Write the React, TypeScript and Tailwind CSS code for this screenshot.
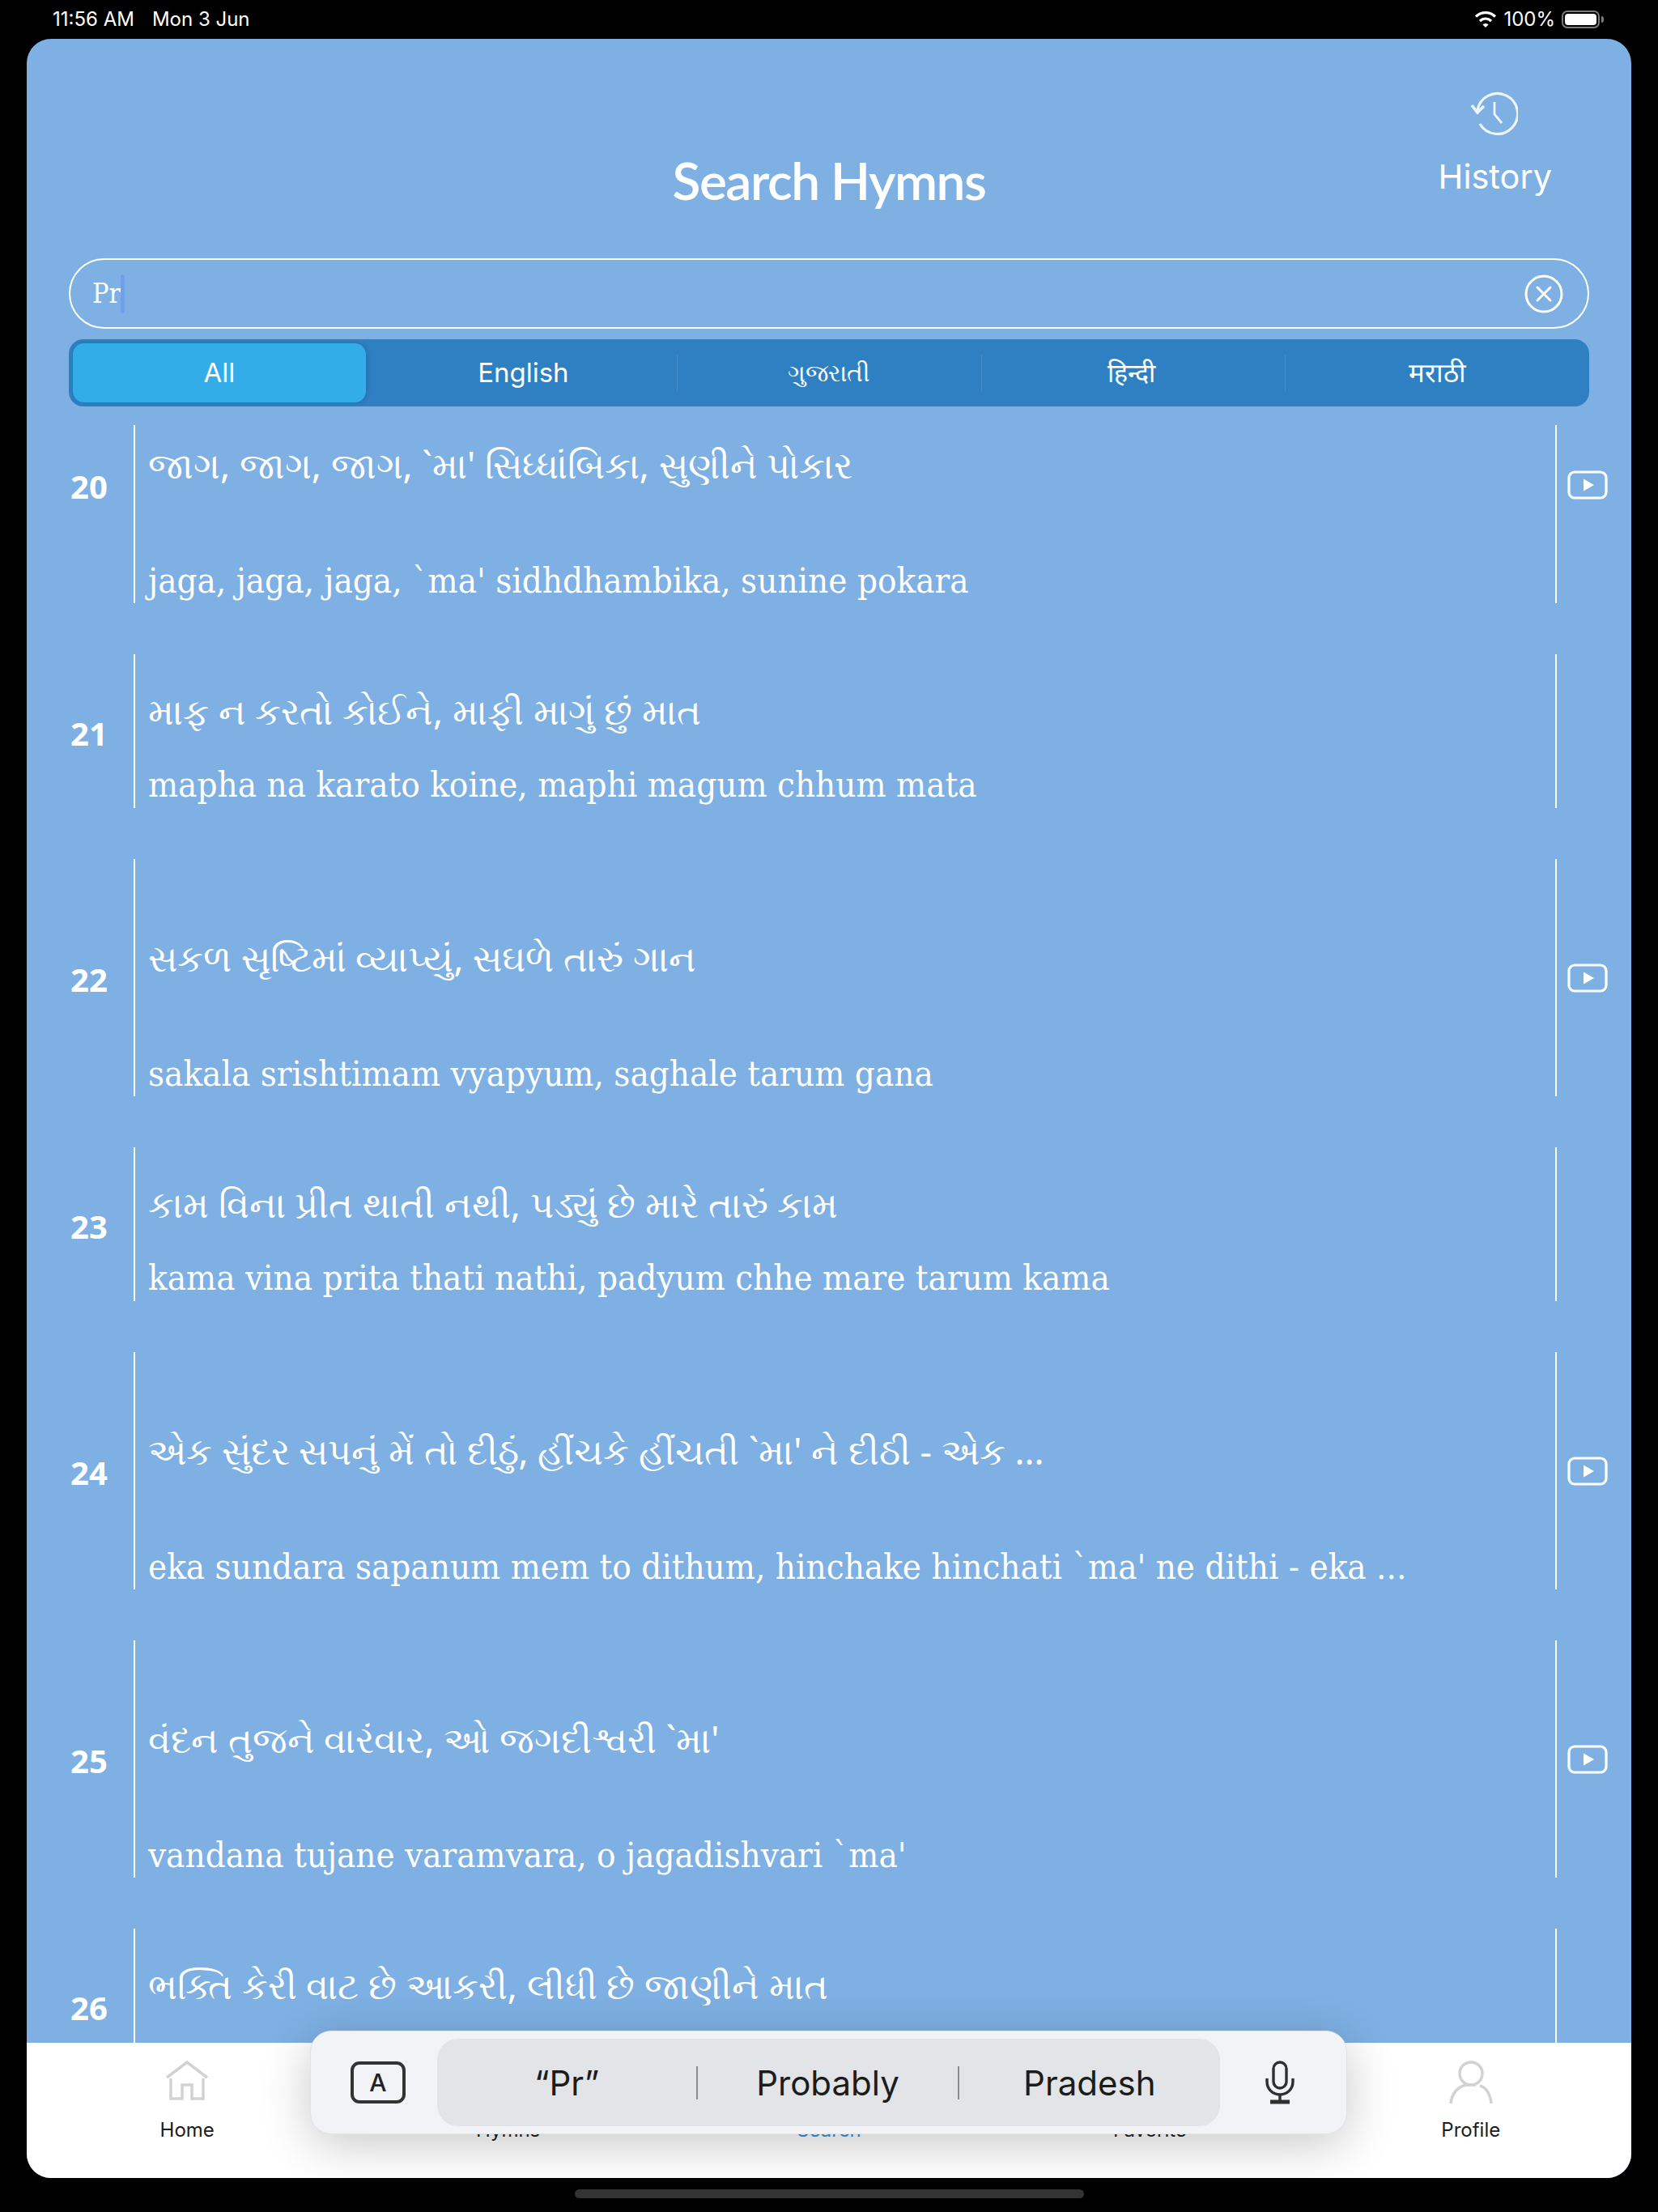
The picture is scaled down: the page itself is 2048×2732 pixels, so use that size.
const serif = "font-['DejaVu_Serif_Condensed','DejaVu_Serif',serif] font-stretch-condensed"

const hymns = [
  { num: 20, gu: "જાગ, જાગ, જાગ, `મા' સિધ્ધાંબિકા, સુણીને પોકાર", en: "jaga, jaga, jaga, `ma' sidhdhambika, sunine pokara", video: true },
  { num: 21, gu: "માફ ન કરતો કોઈને, માફી માગું છું માત", en: "mapha na karato koine, maphi magum chhum mata", video: false },
  { num: 22, gu: "સકળ સૃષ્ટિમાં વ્યાપ્યું, સઘળે તારું ગાન", en: "sakala srishtimam vyapyum, saghale tarum gana", video: true },
  { num: 23, gu: "કામ વિના પ્રીત થાતી નથી, પડ્યું છે મારે તારું કામ", en: "kama vina prita thati nathi, padyum chhe mare tarum kama", video: false },
  { num: 24, gu: "એક સુંદર સપનું મેં તો દીઠું, હીંચકે હીંચતી `મા' ને દીઠી - એક ...", en: "eka sundara sapanum mem to dithum, hinchake hinchati `ma' ne dithi - eka ...", video: true },
  { num: 25, gu: "વંદન તુજને વારંવાર, ઓ જગદીશ્વરી `મા'", en: "vandana tujane varamvara, o jagadishvari `ma'", video: true },
  { num: 26, gu: "ભક્તિ કેરી વાટ છે આકરી, લીધી છે જાણીને માત", en: "bhakti keri vata chhe akari, lidhi chhe janine mata", video: false },
]

const tabs = [
  { label: "All", size: "text-[33px]" },
  { label: "English", size: "text-[33px]" },
  { label: "ગુજરાતી", size: "text-[30px]" },
  { label: "हिन्दी", size: "text-[32px] pr-[5px]" },
  { label: "मराठी", size: "text-[33px]" },
]

function PlayIcon() {
  return (
    <svg width="50" height="36" viewBox="0 0 50 36" fill="none">
      <rect x="2" y="2" width="46" height="32" rx="7" stroke="white" strokeWidth="3.2" />
      <path d="M20 10.5 L33 18 L20 25.5 Z" fill="white" />
    </svg>
  )
}

function HistoryIcon() {
  return (
    <svg width="60" height="56" viewBox="0 0 60 56" fill="none" stroke="#eef5fb" strokeWidth="3.2" className="-ml-[3px]">
      <path d="M10 24 A25 25 0 1 1 13 41" />
      <path d="M3 18 L10 27 L18 19" strokeWidth="3.6" />
      <path d="M31 14 V29 L40 40" strokeWidth="2.8" />
    </svg>
  )
}

function ClearIcon() {
  return (
    <svg width="48" height="48" viewBox="0 0 48 48" fill="none" stroke="white" strokeWidth="3">
      <circle cx="24" cy="24" r="22" />
      <path d="M16 16 L32 32 M32 16 L16 32" strokeLinecap="round" />
    </svg>
  )
}

function WifiIcon() {
  return (
    <svg width="28" height="22" viewBox="0 0 28 22" fill="none" stroke="white" strokeWidth="3.2">
      <path d="M2 7.5 C9 1 19 1 26 7.5" />
      <path d="M7 13 C11 9 17 9 21 13" />
      <path d="M14 21 L10.5 17.5 C12.5 15.5 15.5 15.5 17.5 17.5 Z" fill="white" stroke="none" />
    </svg>
  )
}

function HomeIcon() {
  return (
    <svg width="54" height="50" viewBox="0 0 54 50" fill="none" stroke="#d2d2d2" strokeWidth="3.5">
      <path d="M2 21 L27 2 L52 21" />
      <path d="M7 22 V47 H21 V30 H33 V47 H47 V22" />
    </svg>
  )
}

function ProfileIcon() {
  return (
    <svg width="54" height="54" viewBox="0 0 54 54" fill="none" stroke="#d2d2d2" strokeWidth="3.5">
      <circle cx="27" cy="16" r="14" />
      <path d="M2 53 C3 40 12 31 22 30 H33 M38 31 C46 33 51 42 52 53" />
    </svg>
  )
}

function MicIcon() {
  return (
    <svg width="36" height="54" viewBox="0 0 36 54" fill="none" stroke="#2f2f2f" strokeWidth="3.4">
      <rect x="10" y="2" width="16" height="32" rx="8" />
      <path d="M2 22 V26 C2 35 9 42 18 42 C27 42 34 35 34 26 V22" />
      <path d="M18 42 V50" />
      <path d="M6 51 H30" strokeWidth="5" />
    </svg>
  )
}

function HymnRow({ num, gu, en, video }: { num: number; gu: string; en: string; video: boolean }) {
  return (
    <div className={`flex ${video ? "h-[293px]" : "h-[190px]"} shrink-0`}>
      <div className="w-[132px] pl-[22px] pt-[5px] flex items-center justify-center text-white font-bold text-[40px] font-['Noto_Sans',sans-serif]">
        {num}
      </div>
      <div className={`flex-1 w-0 border-l-2 border-white pl-[16px] flex flex-col text-white ${video ? "pt-[94px] gap-[87px]" : "pt-[42px] gap-[35px]"}`}>
        <div className="text-[45px] leading-[56px] whitespace-nowrap font-['Noto_Sans',sans-serif]">{gu}</div>
        <div className={`text-[43.5px] leading-[56px] whitespace-nowrap ${serif}`}>{en}</div>
      </div>
      <div className="w-[94px] border-l-2 border-white pl-[13px] flex items-center">
        {video && <PlayIcon />}
      </div>
    </div>
  )
}

export default function App() {
  return (
    <div className="w-[2048px] h-[2732px] bg-black flex flex-col font-['Inter',sans-serif] overflow-hidden">
      <div className="h-[48px] shrink-0 flex items-center justify-between pl-[65px] pr-[67px] text-white text-[24px]">
        <div className="flex gap-[22px]">
          <span>11:56 AM</span>
          <span>Mon 3 Jun</span>
        </div>
        <div className="flex items-center gap-[8px]">
          <WifiIcon />
          <span>100%</span>
          <div className="flex items-center gap-[2px]">
            <div className="w-[47px] h-[22px] rounded-[7px] border-2 border-[#7a7a7a] p-[2px]">
              <div className="w-full h-full rounded-[4px] bg-white" />
            </div>
            <div className="w-[3px] h-[8px] rounded-r-full bg-[#7a7a7a]" />
          </div>
        </div>
      </div>

      <div className="relative mx-[33px] w-[1982px] h-[2642px] shrink-0 rounded-[30px] bg-[#7EB0E3] overflow-hidden flex flex-col">
        <div className="h-[271px] shrink-0 grid grid-cols-[1fr_auto_1fr] text-white">
          <div />
          <h1 className="pt-[135px] text-[64px] leading-[80px] tracking-[-1.5px] font-semibold font-['Lato',sans-serif]">Search Hymns</h1>
          <div className="flex justify-end pr-[98px] pt-[64px]">
            <div className="flex flex-col items-center">
              <HistoryIcon />
              <span className="mt-[22px] text-[41.5px] leading-[56px]">History</span>
            </div>
          </div>
        </div>

        <div className="px-[52px] shrink-0">
          <div className="h-[87px] rounded-full border-2 border-white flex items-center justify-between pl-[27px] pr-[30px] text-white">
            <div className="flex items-center">
              <span className={`text-[34px] ${serif}`}>Pr</span>
              <span className="w-[5px] h-[48px] rounded-full bg-[#6f9fee]" />
            </div>
            <ClearIcon />
          </div>
          <div className="mt-[13px] h-[83px] rounded-[18px] bg-[#2F7FC3] grid grid-cols-5 items-center text-white">
            {tabs.map((tab, i) =>
              i === 0 ? (
                <div key={tab.label} className={`h-[73px] ml-[5px] mr-[9px] rounded-[14px] bg-[#33ADE8] flex items-center justify-center shadow-[2px_0_6px_rgba(0,0,0,0.12)] ${tab.size}`}>
                  {tab.label}
                </div>
              ) : (
                <div key={tab.label} className={`h-[45px] flex items-center justify-center ${i > 1 ? "border-l border-[#4a8cc6]" : "pr-[4px]"} ${tab.size}`}>
                  {tab.label}
                </div>
              ),
            )}
          </div>
        </div>

        <div className="flex-1 h-0 mt-[23px] overflow-hidden">
          <div className="-mt-[73px] flex flex-col gap-[63px]">
            {hymns.map((h) => (
              <HymnRow key={h.num} {...h} />
            ))}
          </div>
        </div>

        <div className="h-[167px] shrink-0 bg-white grid grid-cols-5 text-[24px] text-[#1c1c1c] pt-[22px]">
          <div className="flex flex-col items-center">
            <div className="h-[60px]"><HomeIcon /></div>
            <span className="mt-[8px]">Home</span>
          </div>
          <div className="flex flex-col items-center">
            <div className="h-[60px]" />
            <span className="mt-[8px]">Hymns</span>
          </div>
          <div className="flex flex-col items-center text-[#3b8ed0]">
            <div className="h-[60px]" />
            <span className="mt-[8px]">Search</span>
          </div>
          <div className="flex flex-col items-center">
            <div className="h-[60px]" />
            <span className="mt-[8px]">Favorite</span>
          </div>
          <div className="flex flex-col items-center">
            <div className="h-[60px]"><ProfileIcon /></div>
            <span className="mt-[8px]">Profile</span>
          </div>
        </div>

        {/* keyboard shortcut bar floats over the tab bar */}
        <div className="absolute left-[350px] top-[2460px] w-[1281px] h-[128px] rounded-[26px] bg-[#F1F3F6] border border-[#e0e2e5] shadow-[0_12px_60px_rgba(0,0,0,0.22)] flex items-center">
          <div className="w-[156px] flex justify-center pl-[10px]">
            <div className="w-[68px] h-[52px] rounded-[11px] border-[4px] border-[#333] flex items-center justify-center text-[30px] font-medium text-[#222]">A</div>
          </div>
          <div className="w-[967px] h-[108px] rounded-[26px] bg-[#E2E4E7] grid grid-cols-3 items-center text-[42px] text-[#1c1c1c]">
            <div className="h-[41px] flex items-center justify-center border-r-2 border-[#8c8c8c]">“Pr”</div>
            <div className="h-[41px] flex items-center justify-center border-r-2 border-[#8c8c8c]">Probably</div>
            <div className="h-[41px] flex items-center justify-center">Pradesh</div>
          </div>
          <div className="flex-1 flex justify-center pr-[9px]"><MicIcon /></div>
        </div>
      </div>

      <div className="flex-1 flex items-center justify-center">
        <div className="w-[629px] h-[11px] rounded-full bg-[#333] -mt-[4px]" />
      </div>
    </div>
  )
}
